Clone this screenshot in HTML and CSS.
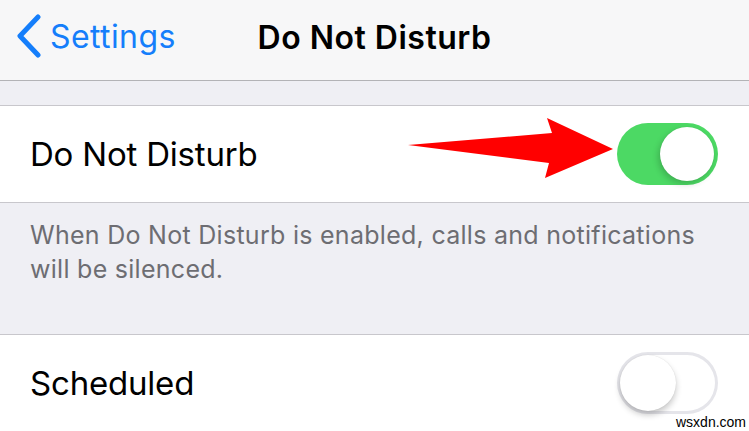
FILE: index.html
```html
<!DOCTYPE html>
<html lang="en">
<head>
<meta charset="utf-8">
<title>Do Not Disturb</title>
<link rel="stylesheet" href="styles.css">
</head>
<body>
<div class="screen">
  <header class="navbar">
    <a class="back" href="#">
      <svg class="chevron" width="30" height="46" viewBox="0 0 30 46" aria-hidden="true">
        <path d="M23 3 L5 22 L23 41" fill="none" stroke="#157efb" stroke-width="5" stroke-linecap="round" stroke-linejoin="round"/>
      </svg>
      <span class="back-label">Settings</span>
    </a>
    <h1 class="nav-title">Do Not Disturb</h1>
  </header>

  <div class="group-gap"></div>

  <section class="cell">
    <span class="cell-label">Do Not Disturb</span>
    <span class="switch on"><span class="knob"></span></span>
  </section>

  <p class="group-footer">When Do Not Disturb is enabled, calls and notifications will be silenced.</p>

  <section class="cell">
    <span class="cell-label">Scheduled</span>
    <span class="switch"><span class="knob"></span></span>
  </section>

  <svg class="pointer" width="749" height="431" viewBox="0 0 749 431" aria-hidden="true">
    <polygon points="408,145 552,133 547,118 613,149 545,178 549,163" fill="#ff0000"/>
  </svg>

  <span class="watermark">wsxdn.com</span>
</div>
</body>
</html>
```

FILE: styles.css
```css
* {
  box-sizing: border-box;
}

html,
body {
  margin: 0;
  padding: 0;
  background: #efeff4;
}

.screen {
  position: relative;
  width: 749px;
  height: 431px;
  overflow: hidden;
  background: #efeff4;
  font-family: Inter, "Liberation Sans", sans-serif;
  color: #000;
}

/* navigation bar */
.navbar {
  position: relative;
  height: 81px;
  background: #f7f7f8;
  border-bottom: 1px solid #b3b3b6;
  display: flex;
  align-items: center;
}

.back {
  display: flex;
  align-items: center;
  gap: 5px;
  padding-left: 15px;
  text-decoration: none;
  color: #157efb;
  margin-top: -7px;
}

.back-label {
  font-size: 32px;
  letter-spacing: 0.4px;
}

.nav-title {
  position: absolute;
  left: 0;
  right: 0;
  top: 0;
  margin: 0;
  height: 74px;
  display: flex;
  align-items: center;
  justify-content: center;
  font-size: 32px;
  font-weight: 600;
  letter-spacing: 0.5px;
}

.group-gap {
  height: 24px;
}

/* table cell */
.cell {
  height: 98px;
  background: #fff;
  border-top: 1px solid #c8c7cc;
  border-bottom: 1px solid #c8c7cc;
  display: flex;
  align-items: center;
  justify-content: space-between;
  padding: 0 31px 0 30px;
}

.cell-label {
  font-size: 33px;
  letter-spacing: -0.2px;
}

.group-footer {
  margin: 0;
  height: 131px;
  padding: 15px 31px 0 30px;
  font-size: 25px;
  line-height: 34px;
  letter-spacing: 0.28px;
  color: #6d6d72;
}

/* switch */
.switch {
  position: relative;
  width: 101px;
  height: 62px;
  border-radius: 31px;
  background: #fff;
  box-shadow: inset 0 0 0 3px #e5e5ea;
}

.switch .knob {
  position: absolute;
  top: 3px;
  left: 3px;
  width: 56px;
  height: 56px;
  border-radius: 50%;
  background: #fff;
  box-shadow: 0 4px 6px rgba(0, 0, 0, 0.22), 0 0 1px rgba(0, 0, 0, 0.15);
}

.switch.on {
  background: #4cd964;
  box-shadow: none;
}

.switch.on .knob {
  left: auto;
  right: 4px;
  top: 4px;
  width: 54px;
  height: 54px;
  box-shadow: -2px 3px 6px rgba(0, 0, 0, 0.18), 0 0 1px rgba(0, 0, 0, 0.12);
}

.pointer {
  position: absolute;
  left: 0;
  top: 0;
  pointer-events: none;
}

.watermark {
  position: absolute;
  left: 676px;
  top: 414px;
  font-family: "Liberation Sans", sans-serif;
  font-size: 14px;
  color: #000;
  background: rgba(255, 255, 255, 0.6);
}
```
